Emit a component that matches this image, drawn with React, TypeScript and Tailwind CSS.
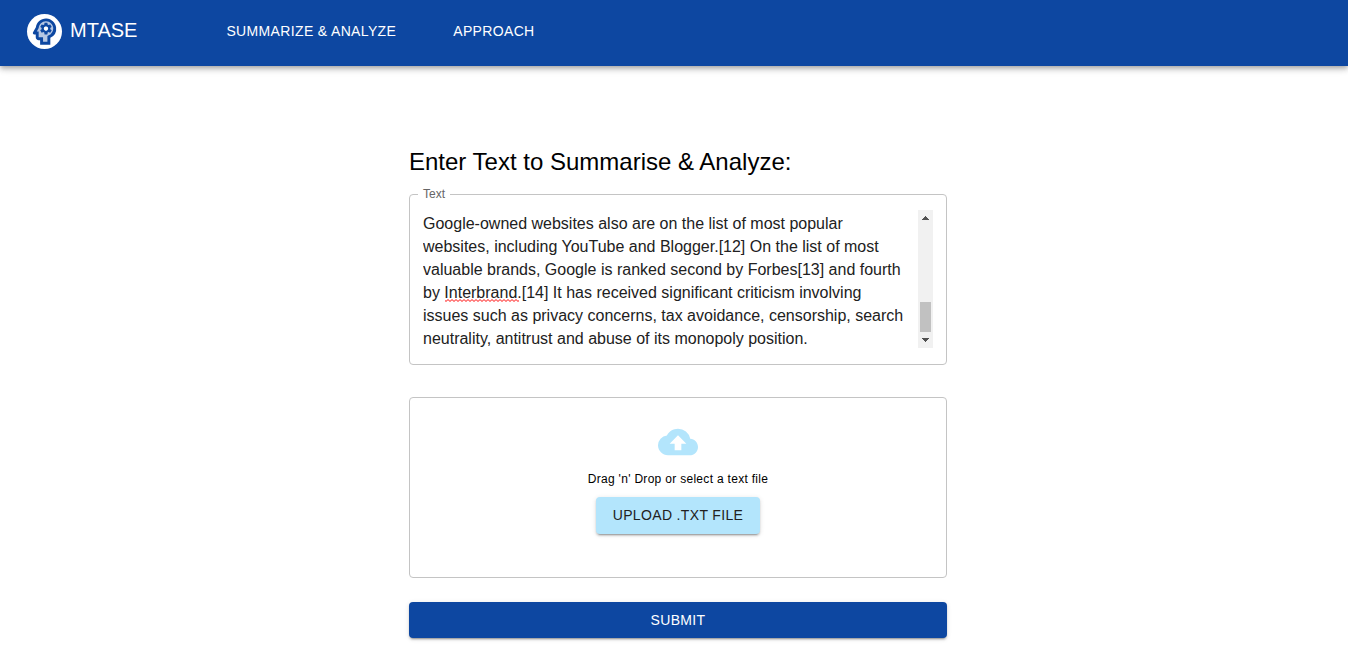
import { useState } from "react";
import { MdCloudUpload, MdOutlinePsychology } from "react-icons/md";

const INITIAL_TEXT = [
  "Google-owned websites also are on the list of most popular",
  "websites, including YouTube and Blogger.[12] On the list of most",
  "valuable brands, Google is ranked second by Forbes[13] and fourth",
  "by Interbrand.[14] It has received significant criticism involving",
  "issues such as privacy concerns, tax avoidance, censorship, search",
  "neutrality, antitrust and abuse of its monopoly position.",
].join("\n");

function Logo() {
  return (
    <span className="relative block size-[35px] rounded-full bg-white text-[#0d47a1]">
      <svg className="absolute inset-0 size-full" viewBox="0 0 24 24" aria-hidden="true">
        <path
          d="M13 4.5C9.4 4.5 6.5 7.4 6.5 11L4.8 13.5H7.5v4h3v3h5v-6.2l1-.6C18.3 13.4 19.5 11.600 19.5 10.500 19.500 7 16.600 4.500 13 4.500z"
          fill="#b6c7e3"
        />
      </svg>
      <MdOutlinePsychology className="absolute inset-0 size-full" aria-hidden="true" />
      <svg className="absolute inset-0 size-full" viewBox="0 0 24 24" aria-hidden="true">
        <circle cx="13" cy="10" r="1.45" fill="#fff" />
      </svg>
    </span>
  );
}

function Header() {
  return (
    <header className="flex min-h-[66px] items-center bg-[#0d47a1] pb-1 pl-[27px] text-white shadow-[0_2px_4px_-1px_rgba(0,0,0,0.2),0_4px_5px_0_rgba(0,0,0,0.14),0_1px_10px_0_rgba(0,0,0,0.12)]">
      <a href="#home" className="flex items-center gap-2">
        <Logo />
        <span className="pb-0.5 text-xl">MTASE</span>
      </a>
      <nav className="ml-[89px] flex gap-[57px] text-sm tracking-wide uppercase">
        <a href="#summarize">Summarize &amp; Analyze</a>
        <a href="#approach">Approach</a>
      </nav>
    </header>
  );
}

function ScrollTrack() {
  return (
    <div className="flex w-[15px] flex-col items-center bg-[#f1f1f1] py-[6px]" aria-hidden="true">
      <svg width="7" height="4" viewBox="0 0 7 4" fill="#505050" shapeRendering="crispEdges">
        <path d="M3 0h1v1h1v1h1v1h1v1H0V3h1V2h1V1h1z" />
      </svg>
      <div className="mt-auto mb-[6px] h-[30px] w-[11px] bg-[#c1c1c1]" />
      <svg width="7" height="4" viewBox="0 0 7 4" fill="#505050" shapeRendering="crispEdges">
        <path d="M0 0h7v1H6v1H5v1H4v1H3V3H2V2H1V1H0z" />
      </svg>
    </div>
  );
}

function SpellingMark() {
  return (
    <svg
      className="pointer-events-none absolute top-[89px] left-[22px]"
      width="74"
      height="3"
      aria-hidden="true"
    >
      <defs>
        <pattern id="wave" width="4" height="3" patternUnits="userSpaceOnUse">
          <path d="M-1 .5L1 2.5L3 .5L5 2.5" fill="none" stroke="#f00" strokeWidth="1" />
        </pattern>
      </defs>
      <rect width="74" height="3" fill="url(#wave)" />
    </svg>
  );
}

export default function App() {
  const [text, setText] = useState(INITIAL_TEXT);

  return (
    <div className="min-h-screen bg-white font-['Liberation_Sans',Arial,sans-serif] text-black">
      <Header />
      <main className="flex justify-center pt-20 pb-6 pl-2">
        <form className="flex w-full max-w-[538px] flex-col" onSubmit={(e) => e.preventDefault()}>
          <h1 className="text-2xl">Enter Text to Summarise &amp; Analyze:</h1>

          <div className="relative mt-4 flex rounded border border-[#c4c4c4] px-[13px] pt-[15px] pb-4">
            <label
              htmlFor="text"
              className="absolute -top-[9px] left-2 bg-white px-[5px] text-xs text-[#666666]"
            >
              Text
            </label>
            <div className="relative flex flex-1">
              <textarea
                id="text"
                rows={6}
                spellCheck={false}
                value={text}
                onChange={(e) => setText(e.target.value)}
                className="block h-[138px] w-full resize-none overflow-hidden bg-transparent pt-0.5 text-base leading-[23px] text-[#212121] outline-none"
              />
              {text === INITIAL_TEXT && <SpellingMark />}
            </div>
            <ScrollTrack />
          </div>

          <section className="mt-8 flex flex-col items-center rounded border border-[#c4c4c4] pt-6 pb-[43px]">
            <MdCloudUpload className="size-10 text-[#b3e5fc]" aria-hidden="true" />
            <p className="mt-[7px] text-xs leading-5 tracking-wide">Drag &apos;n&apos; Drop or select a text file</p>
            <button
              type="button"
              className="mt-2 rounded bg-[#b3e5fc] px-[17px] py-2 text-sm leading-[21px] tracking-wide text-[#212121] uppercase shadow-[0_3px_1px_-2px_rgba(0,0,0,0.2),0_2px_2px_0_rgba(0,0,0,0.14),0_1px_5px_0_rgba(0,0,0,0.12)]"
            >
              Upload .txt file
            </button>
          </section>

          <button
            type="submit"
            className="mt-6 rounded bg-[#0d47a1] py-2 text-sm tracking-wide text-white uppercase shadow-[0_3px_1px_-2px_rgba(0,0,0,0.2),0_2px_2px_0_rgba(0,0,0,0.14),0_1px_5px_0_rgba(0,0,0,0.12)]"
          >
            Submit
          </button>
        </form>
      </main>
    </div>
  );
}
